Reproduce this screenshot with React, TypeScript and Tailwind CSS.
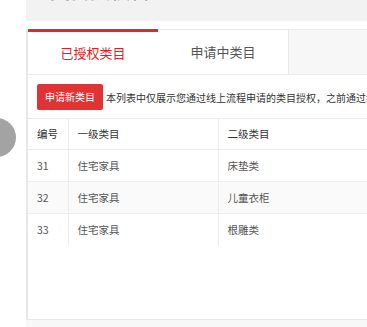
import { ChevronLeft } from "lucide-react";

const rows = [
  { id: 31, first: "住宅家具", second: "床垫类" },
  { id: 32, first: "住宅家具", second: "儿童衣柜" },
  { id: 33, first: "住宅家具", second: "根雕类" },
];

const font = { fontFamily: '"Noto Sans CJK SC", "Noto Sans", sans-serif' };

export default function App() {
  return (
    <div className="relative w-[367px] h-[327px] overflow-hidden bg-white flex" style={font}>
      <div className="w-[26px] shrink-0" />

      <div className="w-[1100px] shrink-0 flex flex-col">
        {/* page title band, scrolled mostly out of view */}
        <div className="h-[21px] bg-[#f2f2f2] overflow-hidden pl-[24px]">
          <div className="-mt-[19px] text-[20px] leading-[20px] text-[#888]">类目授权管理</div>
        </div>

        <div className="mt-[8px] h-[291px] flex flex-col border-l-2 border-[#e8e8e8] border-b border-b-[#e6e6e6]">
          {/* tabs */}
          <div className="flex h-[45px] shrink-0">
            <div className="w-[130px] border-t-[3px] border-[#dd2a2c] flex items-center justify-center text-[13px] text-[#d4262a]">
              已授权类目
            </div>
            <div className="w-[131px] border-t border-r border-[#e8e8e8] flex items-center justify-center text-[13px] text-[#555]">
              申请中类目
            </div>
            <div className="flex-1 bg-[#f7f7f7] border-t border-[#ececec]" />
          </div>

          <div className="flex-1 border-t border-[#ececec]">
            <div className="flex items-center gap-[3px] pl-[9px] pt-[9px] h-[35px]">
              <button className="h-[26px] w-[66px] rounded-[2px] bg-[#e03336] text-white text-[10px] leading-[26px] shrink-0">
                申请新类目
              </button>
              <span className="text-[10px] text-[#333] whitespace-nowrap">
                本列表中仅展示您通过线上流程申请的类目授权，之前通过线下流程申请的类目授权请联系您的客户经理查询。
              </span>
            </div>

            <table className="mt-[8px] w-full border-collapse text-[10.5px] text-[#555]">
              <thead>
                <tr className="h-[31px] border-t border-b border-[#ececec] text-[#333]">
                  <th className="w-[40px] pl-[9px] text-left font-normal border-r border-[#ececec]">编号</th>
                  <th className="w-[150px] pl-[9px] text-left font-normal border-r border-[#ececec]">一级类目</th>
                  <th className="pl-[9px] text-left font-normal">二级类目</th>
                </tr>
              </thead>
              <tbody>
                {rows.map((r, i) => (
                  <tr key={r.id} className={`h-[32px] ${i < rows.length - 1 ? "border-b border-[#efefef]" : ""} ${i === 1 ? "bg-[#fafafa]" : ""}`}>
                    <td className="pl-[9px] border-r border-[#ececec]">{r.id}</td>
                    <td className="pl-[9px] border-r border-[#ececec]">{r.first}</td>
                    <td className="pl-[9px]">{r.second}</td>
                  </tr>
                ))}
              </tbody>
            </table>
          </div>
        </div>

        <div className="flex-1 bg-[#f7f7f7]" />
      </div>

      {/* floating back button, mostly off the left edge */}
      <div className="absolute left-[-23px] top-[118px] w-[39px] h-[39px] rounded-full bg-[#a3a3a3] flex items-center justify-center">
        <ChevronLeft size={14} className="text-white" strokeWidth={3} />
      </div>
    </div>
  );
}
